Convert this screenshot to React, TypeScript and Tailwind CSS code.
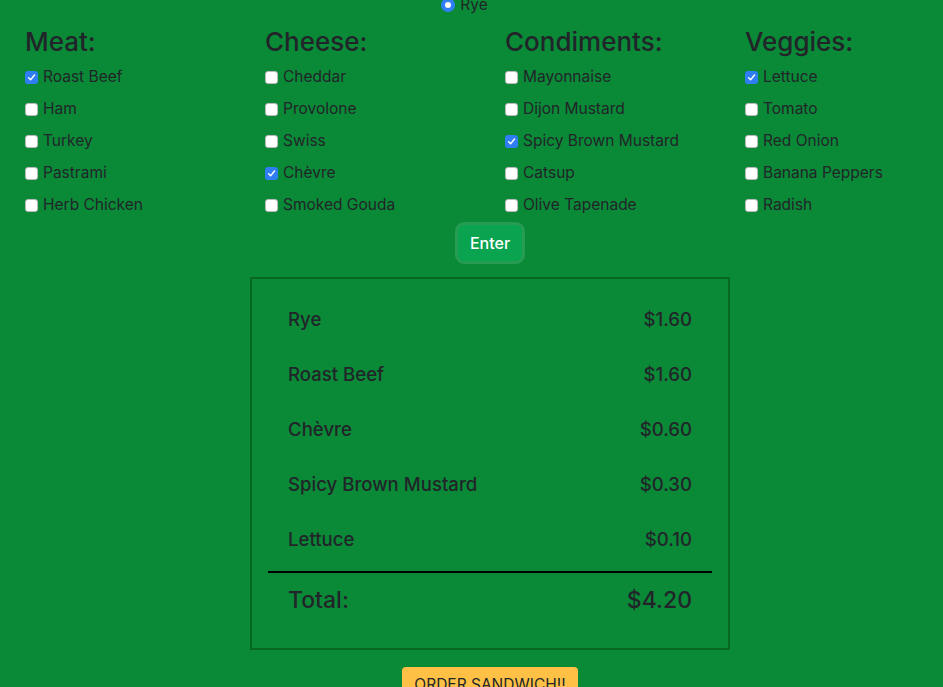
const groups = [
  {
    title: "Meat:",
    items: [
      { name: "Roast Beef", on: true },
      { name: "Ham" },
      { name: "Turkey" },
      { name: "Pastrami" },
      { name: "Herb Chicken" },
    ],
  },
  {
    title: "Cheese:",
    items: [
      { name: "Cheddar" },
      { name: "Provolone" },
      { name: "Swiss" },
      { name: "Chèvre", on: true },
      { name: "Smoked Gouda" },
    ],
  },
  {
    title: "Condiments:",
    items: [
      { name: "Mayonnaise" },
      { name: "Dijon Mustard" },
      { name: "Spicy Brown Mustard", on: true },
      { name: "Catsup" },
      { name: "Olive Tapenade" },
    ],
  },
  {
    title: "Veggies:",
    items: [
      { name: "Lettuce", on: true },
      { name: "Tomato" },
      { name: "Red Onion" },
      { name: "Banana Peppers" },
      { name: "Radish" },
    ],
  },
];

const receipt = [
  ["Rye", "$1.60"],
  ["Roast Beef", "$1.60"],
  ["Chèvre", "$0.60"],
  ["Spicy Brown Mustard", "$0.30"],
  ["Lettuce", "$0.10"],
];

function Box({ on }: { on?: boolean }) {
  return on ? (
    <span className="flex h-[13px] w-[13px] shrink-0 items-center justify-center rounded-[3px] bg-[#2f7ef5]">
      <svg width="9" height="9" viewBox="0 0 10 10" fill="none">
        <path d="M1.8 5.2 4 7.6 8.3 2.2" stroke="white" strokeWidth="1.6" strokeLinecap="round" strokeLinejoin="round" />
      </svg>
    </span>
  ) : (
    <span className="h-[13px] w-[13px] shrink-0 rounded-[3px] border border-[#b9b9b9] bg-white" />
  );
}

export default function App() {
  return (
    <div className="h-screen overflow-hidden bg-[#0a8937] font-['Inter',sans-serif] text-[#212529]">
      <div className="w-[980px]">
        {/* bread choice, scrolled mostly off the top */}
        <div className="-mt-[7px] flex h-6 items-center justify-center gap-[5px] pr-[51px] text-[15.5px]">
          <span className="flex h-[14px] w-[14px] items-center justify-center rounded-full bg-[#2f7ef5]">
            <span className="h-[6px] w-[6px] rounded-full bg-white" />
          </span>
          Rye
        </div>

        <div className="mt-2 grid grid-cols-[240px_240px_240px_240px] pl-[25px]">
          {groups.map((g) => (
            <div key={g.title}>
              <h3 className="mb-[6px] h-[34px] text-[26px] leading-[34px] font-medium">{g.title}</h3>
              <div className="flex flex-col gap-2">
                {g.items.map((it) => (
                  <label key={it.name} className="flex h-6 items-center gap-[5px] text-[15.5px] leading-6">
                    <Box on={it.on} />
                    {it.name}
                  </label>
                ))}
              </div>
            </div>
          ))}
        </div>

        <div className="mt-[8px] flex justify-center">
          <button className="h-[36px] rounded-[6px] bg-[#0aa350] px-3 text-base font-medium text-white shadow-[0_0_0_3px_#269b52]">
            Enter
          </button>
        </div>

        <div className="mx-auto mt-[16px] w-[480px] border-2 border-[#07691f] px-4 pt-[13px] pb-[21px]">
          {receipt.map(([name, price]) => (
            <div key={name} className="flex h-[55px] items-center justify-between px-5 text-[18.6px] font-medium">
              <span>{name}</span>
              <span>{price}</span>
            </div>
          ))}
          <div className="mt-1 h-[2px] bg-black" />
          <div className="flex h-[54px] items-center justify-between px-5 text-[23px] font-medium">
            <span>Total:</span>
            <span>$4.20</span>
          </div>
        </div>

        <div className="mt-[17px] flex justify-center">
          <button className="h-[38px] w-[176px] rounded-[4px] bg-[#ffc145] pb-[2px] text-[15.5px] text-[#212529] uppercase">
            Order Sandwich!!
          </button>
        </div>
      </div>
    </div>
  );
}
